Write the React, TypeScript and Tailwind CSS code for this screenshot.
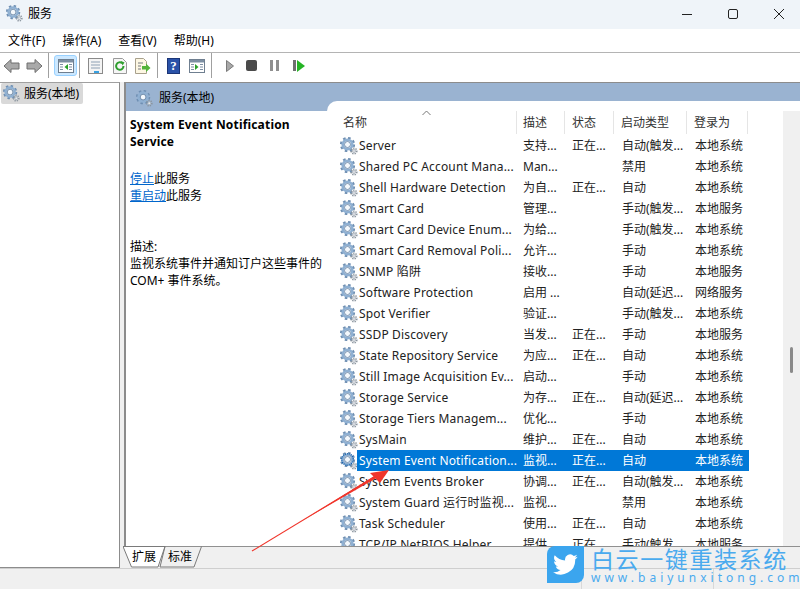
const uiFont = "font-['Noto_Sans','Noto_Sans_CJK_SC',sans-serif]";

interface ServiceRow {
  name: string;
  desc: string;
  state: string;
  start: string;
  login: string;
}

const rows: ServiceRow[] = [
  { name: "Server", desc: "支持...", state: "正在...", start: "自动(触发...", login: "本地系统" },
  { name: "Shared PC Account Mana...", desc: "Man...", state: "", start: "禁用", login: "本地系统" },
  { name: "Shell Hardware Detection", desc: "为自...", state: "正在...", start: "自动", login: "本地系统" },
  { name: "Smart Card", desc: "管理...", state: "", start: "手动(触发...", login: "本地服务" },
  { name: "Smart Card Device Enum...", desc: "为给...", state: "", start: "手动(触发...", login: "本地系统" },
  { name: "Smart Card Removal Poli...", desc: "允许...", state: "", start: "手动", login: "本地系统" },
  { name: "SNMP 陷阱", desc: "接收...", state: "", start: "手动", login: "本地服务" },
  { name: "Software Protection", desc: "启用 ...", state: "", start: "自动(延迟...", login: "网络服务" },
  { name: "Spot Verifier", desc: "验证...", state: "", start: "手动(触发...", login: "本地系统" },
  { name: "SSDP Discovery", desc: "当发...", state: "正在...", start: "手动", login: "本地服务" },
  { name: "State Repository Service", desc: "为应...", state: "正在...", start: "自动", login: "本地系统" },
  { name: "Still Image Acquisition Ev...", desc: "启动...", state: "", start: "手动", login: "本地系统" },
  { name: "Storage Service", desc: "为存...", state: "正在...", start: "自动(延迟...", login: "本地系统" },
  { name: "Storage Tiers Managem...", desc: "优化...", state: "", start: "手动", login: "本地系统" },
  { name: "SysMain", desc: "维护...", state: "正在...", start: "自动", login: "本地系统" },
  { name: "System Event Notification...", desc: "监视...", state: "正在...", start: "自动", login: "本地系统" },
  { name: "System Events Broker", desc: "协调...", state: "正在...", start: "自动(触发...", login: "本地系统" },
  { name: "System Guard 运行时监视...", desc: "监视...", state: "", start: "禁用", login: "本地系统" },
  { name: "Task Scheduler", desc: "使用...", state: "正在...", start: "自动", login: "本地系统" },
  { name: "TCP/IP NetBIOS Helper", desc: "提供...", state: "正在...", start: "手动(触发...", login: "本地服务" },
];

function Gear({ className = "w-[18px] h-[18px]", dither = false }: { className?: string; dither?: boolean }) {
  return (
    <svg className={className} viewBox="0 0 18 18">
      <circle cx="7.500" cy="7.500" r="6.400" fill="none" stroke="#6f8fb2" strokeWidth="2.400" strokeDasharray="2.500 2.500" />
      <circle cx="7.500" cy="7.500" r="4.800" fill="none" stroke="#8fb0d2" strokeWidth="2.600" />
      <circle cx="7.500" cy="7.500" r="3" fill="#f4f8fc" stroke="#58779a" strokeWidth="0.800" />
      <circle cx="14" cy="14" r="2.800" fill="none" stroke="#8a949e" strokeWidth="1.600" strokeDasharray="1.300 1.100" />
      <circle cx="14" cy="14" r="1.500" fill="#e6e9ed" stroke="#98a2ac" strokeWidth="0.700" />
      {dither && <circle cx="7.500" cy="7.500" r="5.800" fill="none" stroke="#0f5fae" strokeWidth="1.400" strokeDasharray="1 1" />}
    </svg>
  );
}

function ToolSep() {
  return <div className="w-px h-[25px] bg-[#a0a0a0]" />;
}

function ArrowIcon({ flip = false }: { flip?: boolean }) {
  return (
    <svg className={flip ? "w-[17px] h-[16px] -scale-x-100" : "w-[17px] h-[16px]"} viewBox="0 0 17 16">
      <path d="M1 8 8 1.500V5h8v6H8v3.500z" fill="#a9a9a9" stroke="#6e6e6e" strokeWidth="1" />
    </svg>
  );
}

function PaneIcon({ green = "left" }: { green?: "left" | "mid" }) {
  return (
    <svg className="w-[16px] h-[14px]" viewBox="0 0 16 14">
      <rect x="0.5" y="0.5" width="15" height="13" fill="#fff" stroke="#6f7f90" />
      <rect x="1" y="1" width="14" height="2.500" fill="#7d8fa3" />
      <path d="M2 5.500h3M2 8h3M2 10.500h3M11 5.500h3M11 8h3M11 10.500h3" stroke="#7d8fa3" />
      {green === "left" ? <path d="M10 5v6L6.500 8z" fill="#2aa02a" /> : <path d="M6 5v6l3.500-3z" fill="#2aa02a" />}
    </svg>
  );
}

function Toolbar() {
  return (
    <div className="h-[29px] flex items-center bg-white pl-[3px] pb-[4px] shrink-0">
      <ArrowIcon />
      <div className="w-[6px]" />
      <ArrowIcon flip />
      <div className="w-[5px]" />
      <ToolSep />
      <div className="ml-[5px] w-[23px] h-[21px] flex items-center justify-center rounded-[3px] bg-[#cce8ff] border border-[#99d1ff]">
        <PaneIcon />
      </div>
      <div className="ml-[2px]"><ToolSep /></div>
      <svg className="ml-[8px] w-[15px] h-[16px]" viewBox="0 0 15 16">
        <rect x="0.5" y="0.5" width="14" height="15" fill="#f4f4f4" stroke="#8a8a8a" />
        <path d="M3 4h9M3 7h9M3 10h9" stroke="#8da0b4" />
        <rect x="6" y="13" width="5" height="2" fill="#38a0e0" />
      </svg>
      <svg className="ml-[10px] w-[14px] h-[16px]" viewBox="0 0 14 16">
        <path d="M.5.5h9l4 4v11H.5z" fill="#f6f6f6" stroke="#9a9a9a" />
        <path d="M10.500 8a3.700 3.700 0 1 1-1.300-2.800" fill="none" stroke="#2e9e2e" strokeWidth="2" />
        <path d="M8 3l3.500 1.500L9.500 7.500z" fill="#2e9e2e" />
      </svg>
      <svg className="ml-[8px] w-[16px] h-[16px]" viewBox="0 0 16 16">
        <path d="M.5.5h8l3 3v12H.5z" fill="#fdf7e3" stroke="#a8a08c" />
        <path d="M3 5h5M3 8h3M3 11h3" stroke="#74797f" />
        <path d="M7 8h4V5.500L15.500 10 11 14v-2.500H7z" fill="#53b33a" />
      </svg>
      <div className="ml-[6px]"><ToolSep /></div>
      <div className="ml-[9px] w-[13px] h-[16px] bg-[#2a52a8] border border-[#1b3577] flex items-center justify-center text-white text-[13px] font-bold font-['Liberation_Serif',serif]">?</div>
      <div className="ml-[9px]"><PaneIcon green="mid" /></div>
      <div className="ml-[6px]"><ToolSep /></div>
      <svg className="ml-[14px] w-[8px] h-[12px]" viewBox="0 0 8 12"><path d="M.5.5 7.500 6 .5 11.500z" fill="#a8a8a8" stroke="#7a7a7a" /></svg>
      <div className="ml-[12px] w-[11px] h-[11px] rounded-[2px] bg-[#4a4a4a]" />
      <div className="ml-[13px] flex gap-[3px]">
        <div className="w-[3px] h-[11px] bg-[#8f8f8f]" />
        <div className="w-[3px] h-[11px] bg-[#8f8f8f]" />
      </div>
      <div className="ml-[14px] flex items-center gap-[1px]">
        <div className="w-[3px] h-[11px] bg-[#707070]" />
        <svg className="w-[8px] h-[12px]" viewBox="0 0 8 12"><path d="M0 0 8 6 0 12z" fill="#25b425" /></svg>
      </div>
    </div>
  );
}

function Arrow() {
  return (
    <svg className="absolute left-[248px] top-[458px] w-[145px] h-[96px]" viewBox="248 458 145 96">
      <path d="M252 551 375 476.500" fill="none" stroke="#f0352b" strokeWidth="1.100" />
      <path d="M300 522 375 475.500 376.500 478z" fill="#f0352b" />
      <path d="M389 470 370 473 380 483z" fill="#f0352b" />
    </svg>
  );
}

function Watermark() {
  return (
    <div className="absolute left-[547px] top-[546px] flex items-start gap-[7px]">
      <div className="w-[37px] h-[37px] rounded-tl-[8px] rounded-br-[8px] bg-[#3ba5ee] flex items-center justify-center">
        <svg className="w-[27px] h-[22px]" viewBox="0 0 24 20">
          <path
            d="M23 2.500c-.8.400-1.700.600-2.600.700.900-.600 1.700-1.400 2-2.500-.900.500-1.800.900-2.900 1.100A4.600 4.600 0 0 0 11.700 6C7.900 5.800 4.500 4 2.200 1.200 1 3.300 1.600 6 3.600 7.300c-.700 0-1.400-.200-2-.600 0 2.200 1.500 4.100 3.700 4.600-.700.200-1.400.200-2.100.100.600 1.900 2.300 3.200 4.300 3.200A9.300 9.300 0 0 1 .700 16.500 13 13 0 0 0 20.800 5c.900-.600 1.700-1.500 2.200-2.500z"
            fill="#fff"
          />
        </svg>
      </div>
      <div className="flex flex-col">
        <div className="text-[23px] leading-[24px] tracking-[1.6px] text-[#4aaaee] font-['Noto_Sans_CJK_SC',sans-serif] whitespace-nowrap">白云一键重装系统</div>
        <div className="text-[12px] leading-[15px] tracking-[4px] text-[#4aaaee] font-['Noto_Sans',sans-serif] whitespace-nowrap">www.baiyunxitong.com</div>
      </div>
    </div>
  );
}

export default function App() {
  return (
    <div className={`relative w-[800px] h-[589px] overflow-hidden flex flex-col bg-[#f0f0f0] text-[12px] text-black ${uiFont}`}>
      <div className="h-[29px] flex items-center bg-[#eff4f9] pl-[6px] pb-[2px] shrink-0">
        <Gear className="w-[17px] h-[17px]" />
        <span className="ml-[5px] text-[12px]">服务</span>
        <div className="ml-auto flex items-center">
          <svg className="w-[12px] h-[12px] mr-[34px]" viewBox="0 0 12 12"><path d="M1 6.500h10" stroke="#222" strokeWidth="1" /></svg>
          <svg className="w-[12px] h-[12px] mr-[34px]" viewBox="0 0 12 12"><rect x="1.500" y="1.500" width="9" height="9" rx="1.500" fill="none" stroke="#222" /></svg>
          <svg className="w-[12px] h-[12px] mr-[15px]" viewBox="0 0 12 12"><path d="M1 1l10 10M11 1 1 11" stroke="#222" /></svg>
        </div>
      </div>

      <div className="h-[24px] flex items-center bg-white border-b border-[#b4b4b4] pl-[8px] gap-[17px] shrink-0">
        <span>文件(F)</span>
        <span>操作(A)</span>
        <span>查看(V)</span>
        <span>帮助(H)</span>
      </div>

      <Toolbar />

      <div className="flex-1 min-h-0 flex">
        <div className="w-[120px] bg-white border-r border-b border-t border-[#8c8c8c] border-t-[#a0a0a0] pl-px shrink-0">
          <div className="w-[82px] h-[21px] flex items-center bg-[#d9d9d9] rounded-[2px] pl-[2px]">
            <Gear className="w-[17px] h-[17px]" />
            <span className="ml-[4px]">服务(本地)</span>
          </div>
        </div>

        <div className="ml-[4px] flex-1 min-w-0 flex flex-col">
          <div className="flex-1 min-h-0 flex flex-col border-l-2 border-t border-[#8c8c8c]">
            <div className="h-[28px] bg-[#9ab3d1] flex items-center pl-[10px] pt-[2px] shrink-0">
              <Gear className="w-[17px] h-[17px]" />
              <span className="ml-[6px]">服务(本地)</span>
            </div>
            <div className="flex-1 min-h-0 flex bg-white">
              <div className="w-[201px] shrink-0 pl-[4px] pt-[5px] leading-[17px]">
                <div className="font-bold text-[12px] leading-[17px] tracking-[0.18px]">System Event Notification<br />Service</div>
                <div className="mt-[20px]"><span className="text-[#0066cc] underline">停止</span>此服务</div>
                <div><span className="text-[#0066cc] underline">重启动</span>此服务</div>
                <div className="mt-[34px]">描述:</div>
                <div>监视系统事件并通知订户这些事件的<br />COM+ 事件系统。</div>
              </div>
              <div className="flex-1 min-w-0 -mt-[10px] relative flex bg-white rounded-tl-[10px] overflow-hidden">
                <div className="flex-1 min-w-0 flex flex-col">
                  <div className="relative h-[34px] pt-[10px] flex shrink-0 text-[#333]">
                    <div className="w-[190px] pl-[16px] border-r border-[#e5e5e5] h-[23px] leading-[23px]">名称</div>
                    <div className="w-[48px] pl-[6px] border-r border-[#e5e5e5] h-[23px] leading-[23px]">描述</div>
                    <div className="w-[49px] pl-[7px] border-r border-[#e5e5e5] h-[23px] leading-[23px]">状态</div>
                    <div className="w-[73px] pl-[7px] border-r border-[#e5e5e5] h-[23px] leading-[23px]">启动类型</div>
                    <div className="w-[61px] pl-[7px] border-r border-[#e5e5e5] h-[23px] leading-[23px]">登录为</div>
                    <svg className="absolute left-[95px] top-[9px] w-[9px] h-[6px]" viewBox="0 0 9 6"><path d="M.5 5 4.500 1l4 4" fill="none" stroke="#777" /></svg>
                  </div>
                  <div className="flex-1 min-h-0 overflow-hidden">
                    {rows.map((r) => {
                      const selected = r.name === "System Event Notification...";
                      return (
                        <div key={r.name} className={`h-[21px] flex items-center leading-[21px] whitespace-nowrap ${selected ? "text-white" : "text-[#222]"}`}>
                          <div className="w-[30px] pl-[13px] shrink-0">
                            <Gear dither={selected} />
                          </div>
                          <div className={`flex h-[21px] w-[392px] ${selected ? "bg-[#0078d7]" : ""}`}>
                            <div className="w-[160px] pl-[2px] tracking-[0.16px]">{r.name}</div>
                            <div className="w-[49px] pl-[6px]">{r.desc}</div>
                            <div className="w-[49px] pl-[6px]">{r.state}</div>
                            <div className="w-[74px] pl-[7px]">{r.start}</div>
                            <div className="w-[60px] pl-[6px]">{r.login}</div>
                          </div>
                        </div>
                      );
                    })}
                  </div>
                </div>
                <div className="w-[17px] mt-[10px] bg-[#f0f0f0] shrink-0 flex justify-center pt-[236px]">
                  <div className="w-[3px] h-[26px] bg-[#8a8a8a] rounded-full" />
                </div>
              </div>
            </div>
          </div>
          <div className="relative h-[22px] border-t border-[#909090] -ml-[1px] flex items-start pl-[9px] shrink-0 bg-[#f0f0f0]">
            <svg className="absolute left-0 -top-[1px] w-[82px] h-[22px]" viewBox="0 0 82 22">
              <path d="M0 .5 8.500 21H35L42 .5z" fill="#fff" stroke="#7a7a7a" />
              <path d="M42 .5 37 21H71L78.500 .5" fill="none" stroke="#7a7a7a" />
            </svg>
            <span className="relative w-[37px] leading-[20px]">扩展</span>
            <span className="relative ml-[-1px] leading-[20px]">标准</span>
          </div>
        </div>
      </div>

      <div className="h-[21px] bg-[#f0f0f0] border-t border-[#cfcfcf] shrink-0 flex">
        <div className="w-[582px] border-r border-[#d8d8d8]" />
        <div className="w-[132px] border-r border-[#d8d8d8]" />
      </div>

      <Arrow />
      <Watermark />
    </div>
  );
}
